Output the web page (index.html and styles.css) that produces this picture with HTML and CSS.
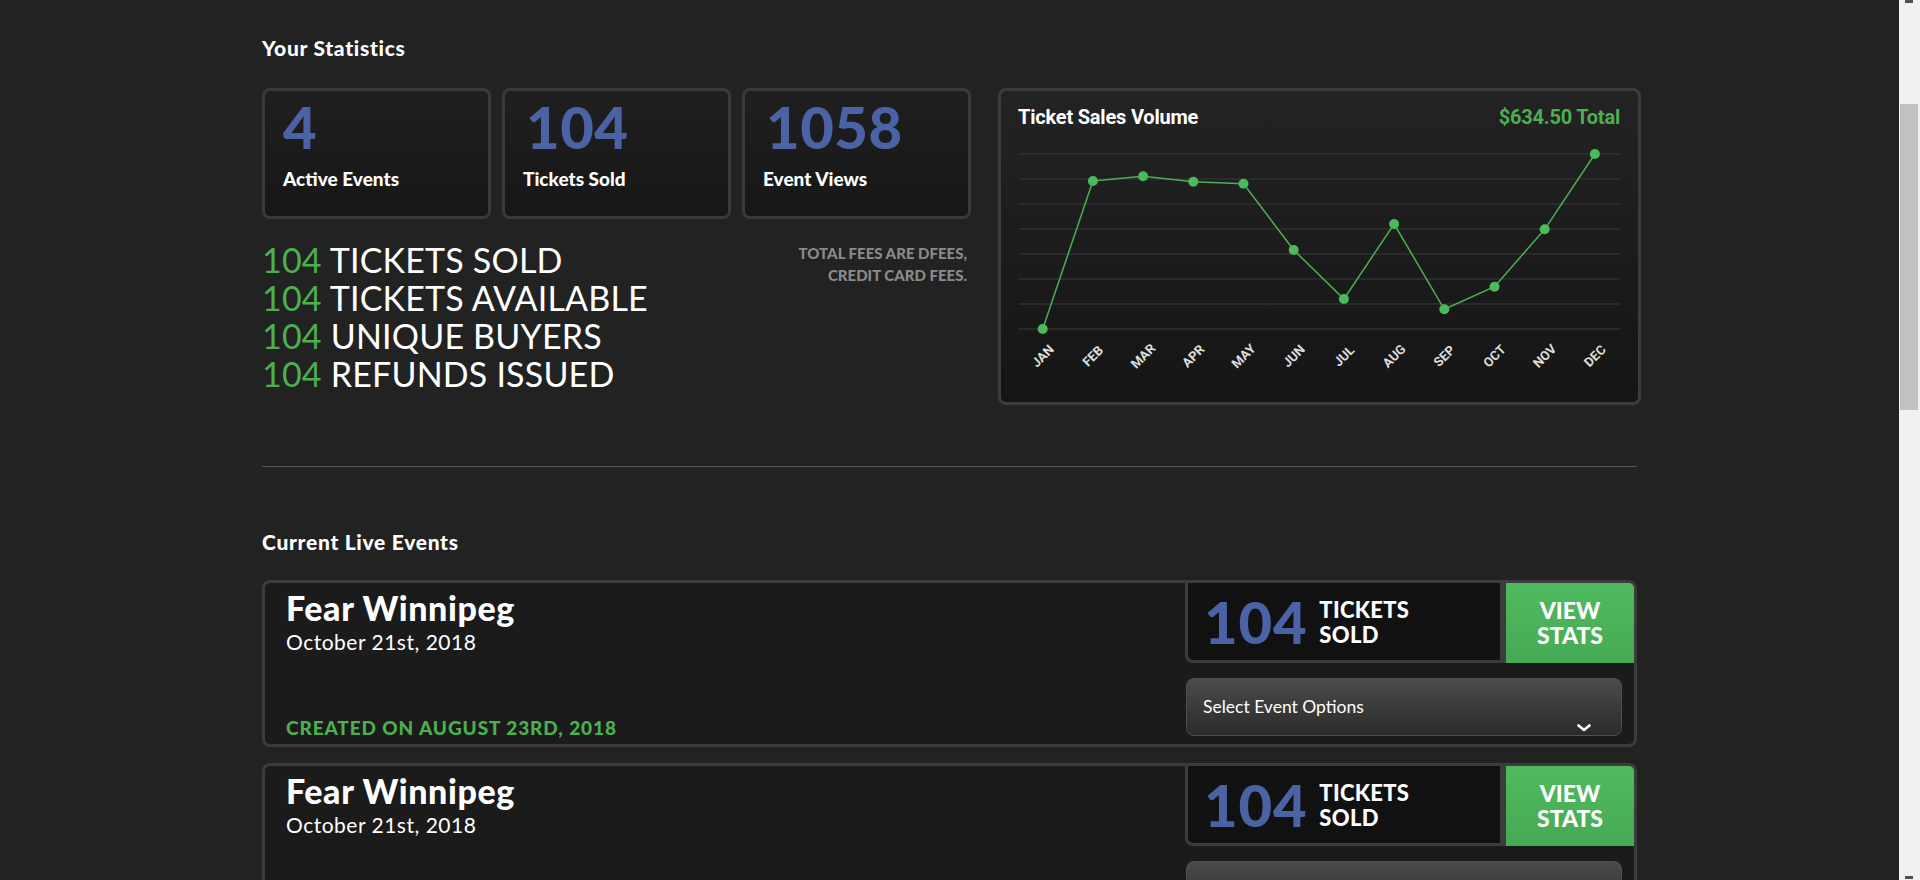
FILE: index.html
```html
<!DOCTYPE html>
<html lang="en">
<head>
<meta charset="utf-8">
<title>Your Statistics</title>
<link rel="stylesheet" href="styles.css">
</head>
<body>
<div class="viewport">
  <main class="main">
    <div class="container">
      <h2 class="section-title">Your Statistics</h2>
      <div class="stats-row">
        <div class="stats-left">
          <div class="stat-cards">
            <div class="stat-card"><div class="stat-num">4</div><div class="stat-label">Active Events</div></div>
            <div class="stat-card"><div class="stat-num">104</div><div class="stat-label">Tickets Sold</div></div>
            <div class="stat-card"><div class="stat-num">1058</div><div class="stat-label">Event Views</div></div>
          </div>
          <div class="summary">
            <ul class="summary-list">
              <li><span class="num">104</span> TICKETS SOLD</li>
              <li><span class="num">104</span> TICKETS AVAILABLE</li>
              <li><span class="num">104</span> UNIQUE BUYERS</li>
              <li><span class="num">104</span> REFUNDS ISSUED</li>
            </ul>
            <p class="fees">TOTAL FEES ARE DFEES,<br>CREDIT CARD FEES.</p>
          </div>
        </div>
        <div class="chart-card">
          <div class="chart-head"><span class="chart-title">Ticket Sales Volume</span><span class="chart-total">$634.50 Total</span></div>
          <svg class="chart" width="637" height="273" viewBox="0 0 637 273">
            <g class="grid">
              <line x1="17.6" y1="25" x2="619" y2="25"/>
              <line x1="17.6" y1="50" x2="619" y2="50"/>
              <line x1="17.6" y1="75" x2="619" y2="75"/>
              <line x1="17.6" y1="100" x2="619" y2="100"/>
              <line x1="17.6" y1="125" x2="619" y2="125"/>
              <line x1="17.6" y1="150" x2="619" y2="150"/>
              <line x1="17.6" y1="175" x2="619" y2="175"/>
              <line x1="17.6" y1="200" x2="619" y2="200"/>
            </g>
            <polyline class="series" points="41.7,200 91.9,52 142.1,47.3 192.3,52.7 242.5,54.7 292.7,121 342.9,170 393.1,95 443.3,180.3 493.5,157.7 543.7,100.3 593.9,25"/>
            <g class="dots">
              <circle cx="41.7" cy="200" r="5"/>
              <circle cx="91.9" cy="52" r="5"/>
              <circle cx="142.1" cy="47.3" r="5"/>
              <circle cx="192.3" cy="52.7" r="5"/>
              <circle cx="242.5" cy="54.7" r="5"/>
              <circle cx="292.7" cy="121" r="5"/>
              <circle cx="342.9" cy="170" r="5"/>
              <circle cx="393.1" cy="95" r="5"/>
              <circle cx="443.3" cy="180.3" r="5"/>
              <circle cx="493.5" cy="157.7" r="5"/>
              <circle cx="543.7" cy="100.3" r="5"/>
              <circle cx="593.9" cy="25" r="5"/>
            </g>
            <g class="months">
              <text transform="translate(41.7 227) rotate(-45)">JAN</text>
              <text transform="translate(91.9 227) rotate(-45)">FEB</text>
              <text transform="translate(142.1 227) rotate(-45)">MAR</text>
              <text transform="translate(192.3 227) rotate(-45)">APR</text>
              <text transform="translate(242.5 227) rotate(-45)">MAY</text>
              <text transform="translate(292.7 227) rotate(-45)">JUN</text>
              <text transform="translate(342.9 227) rotate(-45)">JUL</text>
              <text transform="translate(393.1 227) rotate(-45)">AUG</text>
              <text transform="translate(443.3 227) rotate(-45)">SEP</text>
              <text transform="translate(493.5 227) rotate(-45)">OCT</text>
              <text transform="translate(543.7 227) rotate(-45)">NOV</text>
              <text transform="translate(593.9 227) rotate(-45)">DEC</text>
            </g>
          </svg>
        </div>
      </div>
      <hr class="divider">
      <h2 class="section-title live-title">Current Live Events</h2>
      <div class="event-list">
        <div class="event-card">
          <div class="event-info">
            <div class="event-name">Fear Winnipeg</div>
            <div class="event-date">October 21st, 2018</div>
            <div class="event-created">CREATED ON AUGUST 23RD, 2018</div>
          </div>
          <div class="event-side">
            <div class="event-top">
              <div class="tickets-box">
                <span class="tickets-num">104</span>
                <span class="tickets-label">TICKETS<br>SOLD</span>
              </div>
              <div class="view-stats">VIEW<br>STATS</div>
            </div>
            <div class="event-select">
              <span class="select-text">Select Event Options</span>
              <svg class="chevron" width="14" height="8" viewBox="0 0 14 8"><polyline points="1.5,1.5 7,6 12.5,1.5"/></svg>
            </div>
          </div>
        </div>
        <div class="event-card">
          <div class="event-info">
            <div class="event-name">Fear Winnipeg</div>
            <div class="event-date">October 21st, 2018</div>
            <div class="event-created">CREATED ON AUGUST 23RD, 2018</div>
          </div>
          <div class="event-side">
            <div class="event-top">
              <div class="tickets-box">
                <span class="tickets-num">104</span>
                <span class="tickets-label">TICKETS<br>SOLD</span>
              </div>
              <div class="view-stats">VIEW<br>STATS</div>
            </div>
            <div class="event-select">
              <span class="select-text">Select Event Options</span>
              <svg class="chevron" width="14" height="8" viewBox="0 0 14 8"><polyline points="1.5,1.5 7,6 12.5,1.5"/></svg>
            </div>
          </div>
        </div>
      </div>
    </div>
  </main>
  <div class="scrollbar">
    <div class="sb-arrow sb-up"></div>
    <div class="sb-thumb"></div>
    <div class="sb-arrow sb-down"></div>
  </div>
</div>
</body>
</html>
```

FILE: styles.css
```css
* { box-sizing: border-box; }
html, body { margin: 0; height: 100%; }
body {
  background: #222222;
  color: #ffffff;
  font-family: "Lato", "Noto Sans", sans-serif;
  overflow: hidden;
}
.viewport { display: flex; height: 880px; }
.main { flex: 1; min-width: 0; }
.container { width: 1375px; margin: 0 auto; padding-top: 36px; }

.section-title {
  margin: 0;
  font-size: 21px;
  line-height: 24px;
  font-weight: 900;
  letter-spacing: 0.7px;
}

.stats-row { display: flex; margin-top: 28px; }
.stats-left { width: 709px; flex-shrink: 0; }
.stat-cards { display: grid; grid-template-columns: repeat(3, 229px); gap: 11px; }
.stat-card {
  height: 131px;
  border: 3px solid #3a3a3a;
  border-radius: 8px;
  background: linear-gradient(#1f1f1f, #171717);
  padding: 7px 17px 0 18px;
  display: flex;
  flex-direction: column;
}
.stat-num { font-size: 58px; line-height: 58px; font-weight: 900; color: #4b63a5; letter-spacing: 0.5px; }
.stat-card + .stat-card .stat-num { margin-left: 3px; }
.stat-label { margin-top: 11px; font-size: 19px; line-height: 24px; font-weight: 900; }

.summary { display: flex; justify-content: space-between; margin-top: 22px; }
.summary-list { list-style: none; margin: 0; padding: 0; font-size: 34px; line-height: 38px; letter-spacing: 0.2px; }
.summary-list .num { color: #4caf50; }
.fees {
  margin: 1px 4px 0 0;
  text-align: right;
  font-size: 15px;
  line-height: 22px;
  font-weight: 900;
  color: #8a8a8a;
}

.chart-card {
  width: 643px;
  height: 317px;
  flex-shrink: 0;
  margin-left: 27px;
  border: 3px solid #3c3c3c;
  border-radius: 8px;
  background: linear-gradient(#232323, #151515);
}
.chart-head {
  display: flex;
  justify-content: space-between;
  height: 38px;
  padding: 14px 18px 0 17px;
  font-family: Roboto, sans-serif;
  font-size: 20px;
  line-height: 24px;
  font-weight: 700;
  letter-spacing: -0.2px;
}
.chart-total { color: #4caf50; }
.chart { display: block; }
.chart .grid line { stroke: #303030; stroke-width: 1.5; }
.chart .series { fill: none; stroke: #4caf50; stroke-width: 1.5; }
.chart .dots circle { fill: #4cb95b; }
.chart .months text {
  font-family: Roboto, sans-serif;
  font-size: 13px;
  font-weight: 700;
  fill: #dcdcdc;
  text-anchor: middle;
  dominant-baseline: central;
}

.divider { margin: 61px 0 0; border: 0; border-top: 1px solid #555555; height: 0; }
.live-title { margin-top: 63px; }

.event-list { margin-top: 26px; display: flex; flex-direction: column; gap: 16px; }
.event-card {
  display: flex;
  height: 167px;
  flex-shrink: 0;
  border: 3px solid #3c3c3c;
  border-radius: 8px;
  background: #1b1b1b;
  overflow: hidden;
}
.event-info {
  flex: 1;
  display: flex;
  flex-direction: column;
  padding: 7px 0 5px 21px;
}
.event-name { font-size: 34px; line-height: 36px; font-weight: 900; letter-spacing: 0.6px; }
.event-date { margin-top: 4px; font-size: 21px; line-height: 24px; letter-spacing: 0.5px; }
.event-created {
  margin-top: auto;
  font-size: 19px;
  line-height: 22px;
  font-weight: 900;
  letter-spacing: 0.9px;
  color: #4caf50;
}

.event-side { width: 449px; flex-shrink: 0; display: flex; flex-direction: column; }
.event-top { display: flex; height: 80px; }
.tickets-box {
  width: 321px;
  display: flex;
  align-items: center;
  gap: 12px;
  padding-left: 16px;
  background: #111111;
  border-left: 3px solid #3c3c3c;
  border-bottom: 3px solid #3c3c3c;
  border-right: 6px solid #3c3c3c;
  border-bottom-left-radius: 8px;
}
.tickets-num { font-size: 58px; line-height: 58px; font-weight: 900; color: #4b63a5; letter-spacing: 0.8px; }
.tickets-label { font-size: 22px; line-height: 25px; font-weight: 900; letter-spacing: 0.3px; }
.view-stats {
  flex: 1;
  display: flex;
  align-items: center;
  justify-content: center;
  text-align: center;
  padding-bottom: 1px;
  background: linear-gradient(#4fba5e, #47aa55);
  font-size: 23px;
  line-height: 25px;
  font-weight: 900;
}
.event-select {
  display: flex;
  justify-content: space-between;
  height: 58px;
  margin: 15px 12px 0 1px;
  padding: 0 30px 0 16px;
  border: 1px solid #505050;
  border-radius: 8px;
  background: linear-gradient(#4b4b4b, #2b2b2b);
}
.select-text { align-self: center; font-size: 17.5px; line-height: 22px; }
.chevron { align-self: flex-end; margin-bottom: 3px; }
.chevron polyline { fill: none; stroke: #ffffff; stroke-width: 2.6; stroke-linecap: round; stroke-linejoin: round; }

.scrollbar { width: 21px; flex-shrink: 0; background: #f1f1f1; position: relative; }
.sb-thumb { margin: 104px 2px 0 1px; height: 306px; background: #c1c1c1; }
.sb-arrow { position: absolute; left: 6px; width: 8px; height: 3px; background: #505050; }
.sb-up { top: 0; }
.sb-down { bottom: 1px; }
```
